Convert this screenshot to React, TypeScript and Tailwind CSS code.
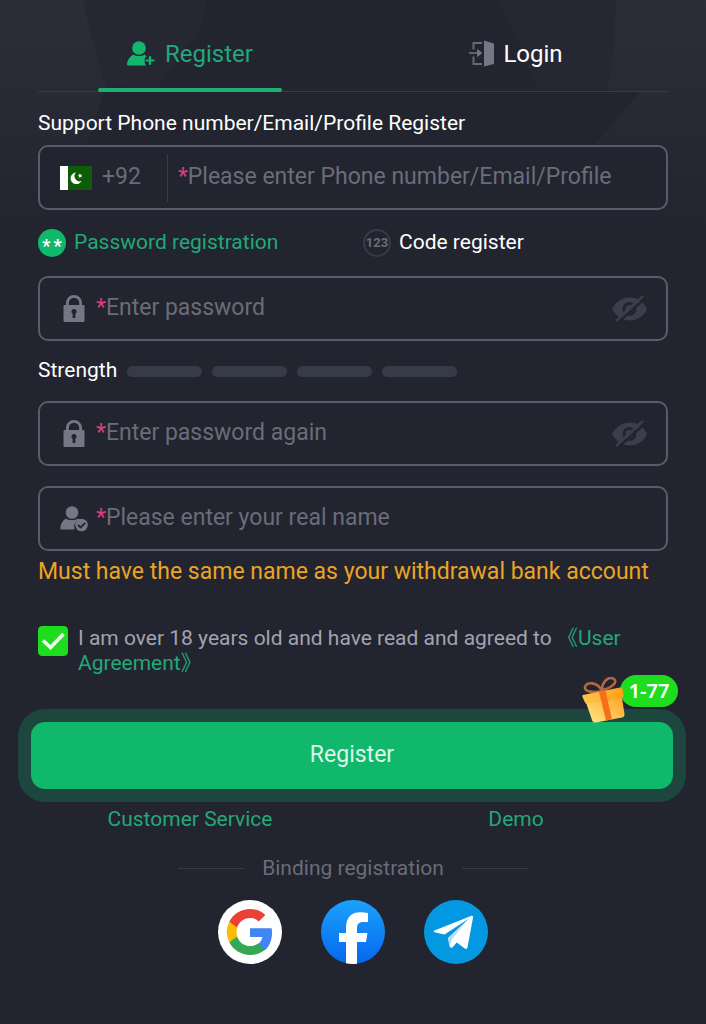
import { useState } from "react";

const LOCK_PATH =
  "M3 10V8a8 8 0 0 1 16 0v2h1.500a1 1 0 0 1 1 1v15a1 1 0 0 1-1 1h-19a1 1 0 0 1-1-1V11a1 1 0 0 1 1-1zM5.800 10h10.400V8a5.200 5.200 0 0 0-10.400 0zM11 14a2.600 2.600 0 0 0-1.400 4.800V23h2.800v-4.200A2.600 2.600 0 0 0 11 14z";

function LockIcon() {
  return (
    <svg width="22" height="28" viewBox="0 0 22 28" fill="#767785" aria-hidden="true">
      <path fillRule="evenodd" d={LOCK_PATH} />
    </svg>
  );
}

function UserCheckIcon() {
  return (
    <svg width="28" height="26" viewBox="0 0 28 26" fill="#767785" aria-hidden="true">
      <circle cx="12" cy="6.500" r="6.300" />
      <path d="M6 12.500c2.500 2.300 9 2.300 12 0l2 1a7.500 7.500 0 0 0-5.500 10H1.500C.5 23.500 0 22.500.4 21c.8-4 2.700-7 5.600-8.500z" />
      <circle cx="21.500" cy="19" r="6.300" />
      <path d="M18 19l2.600 2.500 4.600-4.700" fill="none" stroke="#22242f" strokeWidth="1.800" />
    </svg>
  );
}

function UserPlusIcon() {
  return (
    <svg width="28" height="26" viewBox="0 0 28 26" fill="#14b66d" aria-hidden="true">
      <circle cx="12" cy="7" r="6.800" />
      <path d="M6.500 13.500c2.700 2 8.300 2 11 0l2 1.800-1.800 2.200v4.500l1.300 2.500H2c-1.500 0-2.200-.8-1.900-2.200.7-3.800 3-7.300 6.400-8.800z" />
      <path d="M23 16v7M19.500 19.500h7" stroke="#14b66d" strokeWidth="2.200" strokeLinecap="round" />
    </svg>
  );
}

function DoorIcon() {
  return (
    <svg width="26" height="27" viewBox="0 0 26 27" fill="none" aria-hidden="true">
      <path d="M13 3H4.500v6.500M4.500 16.500v7.500H13" stroke="#686977" strokeWidth="2" />
      <path d="M0 13h10M9 10.500l3 2.500-3 2.500z" stroke="#767785" strokeWidth="1.700" fill="#767785" />
      <path d="M15 .5l10 3v20.500l-10 2.500z" fill="#767785" />
    </svg>
  );
}

function EyeOffIcon() {
  return (
    <svg width="36" height="28" viewBox="0 0 36 28" aria-hidden="true">
      <path
        fillRule="evenodd"
        fill="#3b3e4c"
        d="M0 14C4 6.500 10.500 2.500 18 2.500S31.500 6.500 35 14C31.500 21.500 25.500 25.500 18 25.500S4 21.500 0 14zm17.500-7a7 7 0 1 0 0 14 7 7 0 0 0 0-14zm0 3a4 4 0 1 1 0 8 4 4 0 0 1 0-8z"
      />
      <path d="M6 27.500L33 3.500" stroke="#22242f" strokeWidth="2.400" />
      <path d="M4 26L31 1" stroke="#3b3e4c" strokeWidth="2.400" />
    </svg>
  );
}

function GiftIcon() {
  return (
    <svg width="44" height="46" viewBox="0 0 44 46" aria-hidden="true">
      <defs>
        <linearGradient id="giftBox" x1="1" y1="0" x2="0" y2="1">
          <stop offset="0" stopColor="#ff9d20" />
          <stop offset="1" stopColor="#ffea88" />
        </linearGradient>
        <linearGradient id="giftLid" x1="0" y1="0" x2="1" y2="0">
          <stop offset="0" stopColor="#ffc64c" />
          <stop offset="1" stopColor="#ff9f16" />
        </linearGradient>
      </defs>
      <path d="M20 14C16 5 4 4 3 10c-.5 5 8 6 17 4zM20 13c0-9 7-14 12-11 4 3-2 9-12 11z" fill="none" stroke="#b56742" strokeWidth="2.600" />
      <path d="M3.500 24l36-6 3 19c.3 2-.7 3-2.500 3.500l-26 5c-2 .3-3.200-.4-3.900-2.300z" fill="url(#giftBox)" />
      <path d="M1 18l37-7.500c1.500-.3 2.300.3 2.500 1.800l1 6c.2 1.500-.5 2-2 2.300l-34 6c-1.500.3-2.300-.2-2.700-1.600L.5 20c-.3-1.200-.3-1.800.5-2z" fill="url(#giftLid)" />
      <path d="M17 14.800l6.500-1.300 6.500 29-6 1.100z" fill="#f4701b" />
    </svg>
  );
}

function GoogleLogo() {
  return (
    <svg width="64" height="64" viewBox="0 0 64 64" aria-hidden="true">
      <circle cx="32" cy="32" r="32" fill="#fff" />
      <g transform="translate(9 9) scale(1.917)">
        <path fill="#4285f4" d="M23.500 12.300c0-.9-.1-1.500-.2-2.200H12v4.500h6.500c-.3 1.500-1.100 2.800-2.500 3.700v3.100h4c2.300-2.200 3.500-5.300 3.500-9.100z" />
        <path fill="#34a853" d="M12 24c3.200 0 6-1.100 8-2.900l-4-3c-1.100.7-2.400 1.200-4 1.200-3.100 0-5.800-2.100-6.700-5H1.200v3.100C3.200 21.300 7.300 24 12 24z" />
        <path fill="#fbbc05" d="M5.300 14.300a7.200 7.200 0 0 1 0-4.600V6.600H1.200a12 12 0 0 0 0 10.800z" />
        <path fill="#ea4335" d="M12 4.700c1.800 0 3.300.6 4.600 1.800l3.400-3.400C18 1.200 15.200 0 12 0 7.300 0 3.200 2.700 1.200 6.600l4.100 3.100c.9-2.900 3.600-5 6.700-5z" />
      </g>
    </svg>
  );
}

function FacebookLogo() {
  return (
    <svg width="64" height="64" viewBox="0 0 64 64" aria-hidden="true">
      <defs>
        <linearGradient id="fbBlue" x1="0" y1="0" x2="0" y2="1">
          <stop offset="0" stopColor="#1ba2fb" />
          <stop offset="1" stopColor="#0666ef" />
        </linearGradient>
      </defs>
      <circle cx="32" cy="32" r="32" fill="url(#fbBlue)" />
      <path fill="#fff" d="M25 63.200V42h-7v-9h7v-5c0-10.500 5-15.800 14-15.800 3 0 5.500.2 8 .7v9h-4.500c-5 0-6.500 2.300-6.500 6.500V33h10.500L45 42h-9v21.700a32 32 0 0 1-11-.5z" />
    </svg>
  );
}

function TelegramLogo() {
  return (
    <svg width="64" height="64" viewBox="0 0 64 64" aria-hidden="true">
      <circle cx="32" cy="32" r="32" fill="#0598e2" />
      <path fill="#fff" d="M10.500 30.500L47 16c1.500-.5 2.300.3 2 1.800l-5.500 29.500c-.4 1.700-1.300 2-2.700 1.100l-8-5.800-4.300 4.600c-1 1-2 .8-2.500-.6L24 38l21-19.500L20.500 34.500l-10-2.300c-1-.4-1-1.200 0-1.700z" />
      <path fill="#b7dcf1" d="M24 38l18-16-14 17-2.500 8.200z" />
    </svg>
  );
}

function PakistanFlag() {
  return (
    <svg width="32" height="24" viewBox="0 0 32 24" role="img" aria-label="Pakistan">
      <path fill="#fff" d="M0 0h8v24H0z" />
      <path fill="#0c5c08" d="M8 0h24v24H8z" />
      <path fill="#fff" d="M16 6.500a5.800 5.800 0 1 0 5.500 8.500A5.200 5.200 0 0 1 16 6.500z" />
      <path fill="#fff" d="M19.500 7.500l1 1.300 1.600-.3-.9 1.400.7 1.400-1.600-.4-1.100 1.100-.1-1.600-1.400-.7 1.500-.6z" />
    </svg>
  );
}

function Backdrop() {
  return (
    <svg
      className="pointer-events-none absolute inset-x-0 top-0 h-72 w-full"
      viewBox="0 0 706 288"
      preserveAspectRatio="none"
      aria-hidden="true"
    >
      <defs>
        <linearGradient id="haze" x1="0" y1="0" x2="0" y2="1">
          <stop offset="0" stopColor="#2b2d39" />
          <stop offset="1" stopColor="#22242f" />
        </linearGradient>
      </defs>
      <path fill="url(#haze)" d="M0 0h84l6 32 16 54-20 60 20 50L0 240z" />
      <path fill="#272934" opacity=".8" d="M84 0h122q-2 28-16 42l-34 46-50-2-16-54z" />
      <path fill="#272934" opacity=".8" d="M498 0h118l-2 50-7 40h-70l-26-66z" />
      <path fill="url(#haze)" d="M616 0h90v240l-60-40-52-54 46-54-33-2 7-40z" />
    </svg>
  );
}

const FIELD =
  "flex h-[65px] items-center rounded-[10px] border-2 border-[#5b5c69] bg-[#22242f] pl-5 pr-[18px]";
const INPUT =
  "min-w-0 flex-1 bg-transparent text-[23px] text-white outline-none placeholder:text-[#6b6c79] placeholder:opacity-100";

type FieldProps = {
  id: string;
  type?: string;
  placeholder: string;
  icon: React.ReactNode;
};

function Field({ id, type = "text", placeholder, icon }: FieldProps) {
  const [value, setValue] = useState("");
  const [visible, setVisible] = useState(false);
  const isPassword = type === "password";

  return (
    <div className={FIELD}>
      <label htmlFor={id} aria-label={placeholder} className="flex items-center">
        <span className="flex w-7 justify-center">{icon}</span>
        <span className="ml-2 text-[23px] text-[#d93f7c]">*</span>
      </label>
      <input
        id={id}
        required
        type={isPassword && !visible ? "password" : "text"}
        placeholder={placeholder}
        value={value}
        onChange={(e) => setValue(e.target.value)}
        className={INPUT}
      />
      {isPassword && (
        <button type="button" aria-label="Show password" onClick={() => setVisible(!visible)}>
          <EyeOffIcon />
        </button>
      )}
    </div>
  );
}

export default function App() {
  const [account, setAccount] = useState("");
  const [agreed, setAgreed] = useState(true);

  return (
    <main className="relative min-h-screen bg-[#22242f] font-[Roboto,'Noto_Sans_CJK_SC',sans-serif] text-white">
      <Backdrop />
      <form onSubmit={(e) => e.preventDefault()} className="relative px-[38px] pb-14">
        <nav className="grid grid-cols-2 gap-[22px] border-b border-[#383a45] text-[24px]">
          <button type="button" className="relative flex h-[91px] items-center justify-center gap-[10px] pb-4 pt-8 text-[#22a879]">
            <UserPlusIcon />
            Register
            <span className="absolute -bottom-px left-1/2 h-1 w-[184px] -translate-x-1/2 rounded-full bg-[#20ae73]" />
          </button>
          <button type="button" className="flex h-[91px] items-center justify-center gap-2 pb-4 pt-8">
            <DoorIcon />
            Login
          </button>
        </nav>

        <label htmlFor="account" className="block pb-2 pt-[17px] text-[21px] leading-7">
          Support Phone number/Email/Profile Register
        </label>
        <div className={FIELD}>
          <PakistanFlag />
          <span className="ml-[10px] text-[23px] text-[#6b6c79]">+92</span>
          <span className="ml-[26px] h-12 w-px bg-[#383a45]" />
          <span className="ml-[10px] text-[23px] text-[#d93f7c]">*</span>
          <input
            id="account"
            required
            placeholder="Please enter Phone number/Email/Profile"
            value={account}
            onChange={(e) => setAccount(e.target.value)}
            className={INPUT}
          />
        </div>

        <div className="grid h-[66px] grid-cols-2 items-center gap-5 text-[21px]">
          <button type="button" className="flex items-center gap-2 text-[#22a879]">
            <span className="flex size-7 items-center justify-center gap-[3px] rounded-full bg-[#10b86b] pt-[6px] text-[18px] font-bold leading-none text-white">
              <span>*</span>
              <span>*</span>
            </span>
            Password registration
          </button>
          <button type="button" className="flex items-center gap-2">
            <span className="flex size-7 items-center justify-center rounded-full border-2 border-[#383a45] text-[13px] font-bold text-[#6b6c79]">
              123
            </span>
            Code register
          </button>
        </div>

        <Field id="password" type="password" placeholder="Enter password" icon={<LockIcon />} />

        <div className="flex h-[60px] items-center text-[21px]">
          Strength
          <div className="ml-[10px] flex gap-[10px]">
            {[0, 1, 2, 3].map((level) => (
              <span key={level} className="h-[11px] w-[75px] rounded-full bg-[#373b48]" />
            ))}
          </div>
        </div>

        <div className="flex flex-col gap-5">
          <Field id="confirm" type="password" placeholder="Enter password again" icon={<LockIcon />} />
          <Field id="realName" placeholder="Please enter your real name" icon={<UserCheckIcon />} />
        </div>
        <p className="mt-[5px] text-[23px] leading-8 text-[#eba423]">
          Must have the same name as your withdrawal bank account
        </p>

        <div className="mt-[38px] flex items-start gap-[10px] text-[21px] leading-[25px] text-[#a2a3af]">
          <span className="relative size-[30px] shrink-0">
            <input
              id="agree"
              type="checkbox"
              checked={agreed}
              onChange={(e) => setAgreed(e.target.checked)}
              className="block size-full appearance-none rounded-sm border border-[#1edc1e] checked:bg-[#1edc1e]"
            />
            {agreed && (
              <svg className="pointer-events-none absolute inset-0" viewBox="0 0 30 30" fill="none" aria-hidden="true">
                <path d="M5 14.500l7.500 7L25.500 8" stroke="#fff" strokeWidth="3.500" />
              </svg>
            )}
          </span>
          <p>
            <label htmlFor="agree">I am over 18 years old and have read and agreed to</label>{" "}
            <a href="#agreement" className="text-[#22a879]">
              《User Agreement》
            </a>
          </p>
        </div>

        <div className="relative -ml-5 -mr-[18px] mt-[33px] rounded-[27px] bg-[#1c463e] p-[13px]">
          <button type="submit" className="block h-[67px] w-full rounded-[14px] bg-[#10b86b] pb-px text-[23px] text-[#dff5ea]">
            Register
          </button>
          <span className="absolute -top-[34px] right-2 flex h-8 w-[58px] items-center justify-center rounded-full bg-[#1edc1e] font-['Noto_Sans',sans-serif] text-[20px] font-semibold">
            1-77
          </span>
          <span className="absolute -top-8 right-[60px]">
            <GiftIcon />
          </span>
        </div>

        <div className="mt-[3px] grid grid-cols-2 gap-[22px] text-center text-[21px] leading-7 text-[#22a879]">
          <a href="#service">Customer Service</a>
          <a href="#demo">Demo</a>
        </div>

        <div className="mt-[21px] flex items-center justify-center gap-[18px] text-[21px] leading-7 text-[#6b6c79]">
          <span className="h-px w-[66px] bg-[#383a45]" />
          Binding registration
          <span className="h-px w-[66px] bg-[#383a45]" />
        </div>
        <div className="mt-[18px] flex justify-center gap-[39px]">
          <button type="button" aria-label="Google">
            <GoogleLogo />
          </button>
          <button type="button" aria-label="Facebook">
            <FacebookLogo />
          </button>
          <button type="button" aria-label="Telegram">
            <TelegramLogo />
          </button>
        </div>
      </form>
    </main>
  );
}
